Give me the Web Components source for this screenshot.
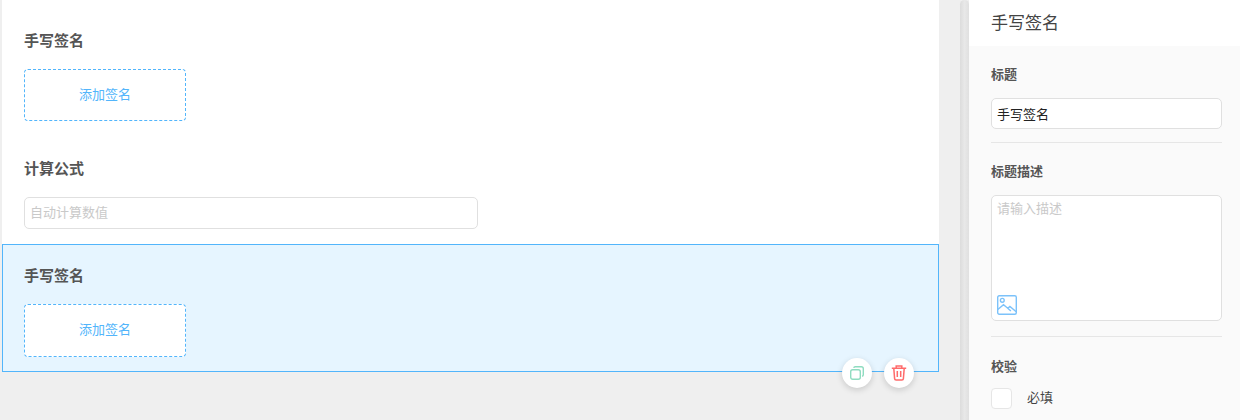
<!DOCTYPE html>
<html lang="zh"><head><meta charset="utf-8">
<style>
html,body{margin:0;padding:0;height:420px;overflow:hidden;background:#efefef;font-family:"Noto Sans CJK SC","Noto Sans",sans-serif}
</style></head><body>
<form-designer>
  <form-canvas slot="canvas">
    <form-item label="手写签名" style="--top:31px;--h:137px"><sign-box></sign-box></form-item>
    <form-item label="计算公式" style="--top:22px;--h:107px"><calc-input>自动计算数值</calc-input></form-item>
    <form-item label="手写签名" selected style="--top:22px;--h:128px"><sign-box style="height:53px"></sign-box>
      <item-actions slot="actions"></item-actions>
    </form-item>
  </form-canvas>
  <side-panel slot="panel" heading="手写签名"></side-panel>
</form-designer>
<script>
function def(name, html){
  customElements.define(name, class extends HTMLElement{
    constructor(){super();this.attachShadow({mode:'open'}).innerHTML=html;}
    connectedCallback(){
      const h=this.shadowRoot.querySelector('[data-label]');
      if(h)h.textContent=this.getAttribute('label')||this.getAttribute('heading')||'';
    }
  });
}
def('form-designer',`<style>
:host{display:flex;width:1240px;height:420px;overflow:hidden;background:#efefef}
.left{width:960px;flex:none;display:flex}
.bar{width:9px;flex:none;height:420px;background:linear-gradient(90deg,#dcdcdc,#e8e8e8 50%,#e0e0e0);border-radius:5px 5px 0 0}
.right{flex:1;min-width:0}
</style><div class="left"><slot name="canvas"></slot></div><div class="bar"></div><div class="right"><slot name="panel"></slot></div>`);
def('form-canvas',`<style>
:host{display:block;width:937px;margin-left:2px;height:372px;background:#fff}
</style><slot></slot>`);
def('form-item',`<style>
:host{display:block;position:relative;box-sizing:border-box;height:var(--h);padding:var(--top) 0 0 22px}
:host([selected]){background:#e6f5ff;outline:1px solid #52b5fb;outline-offset:-1px}
.t{font-size:15px;font-weight:700;line-height:18px;height:20px;margin-bottom:18px;color:#555}
</style><div class="t" data-label></div><slot></slot><slot name="actions"></slot>`);
def('sign-box',`<style>
:host{display:flex;align-items:center;justify-content:center;box-sizing:border-box;width:162px;height:52px;padding-bottom:4px;border:1px dashed #52b5fb;border-radius:4px;background:#fff;color:#52b5fb;font-size:13px}
</style>添加签名`);
def('calc-input',`<style>
:host{display:flex;align-items:center;box-sizing:border-box;width:454px;height:32px;border:1px solid #e0e0e0;border-radius:5px;padding:0 0 4px 5px;background:#fff;color:#c9c9c9;font-size:13px}
</style><slot></slot>`);
def('item-actions',`<style>
:host{position:absolute;right:25px;top:114px;display:flex;gap:12px}
.b{width:30px;height:30px;border-radius:50%;background:#fff;box-shadow:0 2px 6px rgba(0,0,0,.16);display:flex;align-items:center;justify-content:center}
svg{display:block}
</style><div class="b"><svg width="14" height="14" viewBox="0 0 14 14" fill="none" stroke="#8fdcc0" stroke-width="1.4"><rect x=".7" y="3.7" width="9.6" height="9.6" rx="2"/><path d="M3.7 1.9A1.6 1.6 0 0 1 5.3.7h6c1.1 0 2 .9 2 2v6a1.6 1.6 0 0 1-1.2 1.5"/></svg></div>
<div class="b"><svg width="16" height="16" viewBox="0 0 16 16" fill="none" stroke="#ff6b6b" stroke-width="1.5"><path d="M.8 3.2h14.4M5.2 3V1h5.6v2M2.8 3.4l.8 10.2a1.5 1.5 0 0 0 1.5 1.4h5.8a1.5 1.5 0 0 0 1.5-1.4l.8-10.2M6.3 6v6M9.7 6v6"/></svg></div>`);
def('side-panel',`<style>
:host{display:block;height:420px;background:#fafafa;color:#555}
.h{height:46px;background:#fff;padding-left:22px;font-size:17px;line-height:44px;color:#444;box-sizing:border-box}
.body{padding:0 18px 0 22px}
.lab{font-size:13px;font-weight:700;line-height:16px;color:#555;height:18px}
.inp{box-sizing:border-box;height:31px;border:1px solid #e0e0e0;border-radius:5px;background:#fff;padding-left:5px;font-size:13px;line-height:30px;color:#222;margin-top:14px}
.hr{height:1px;background:#e6e6e6}
.ta{box-sizing:border-box;height:126px;border:1px solid #e0e0e0;border-radius:5px;background:#fff;padding:2px 5px 3px;font-size:13px;line-height:20px;color:#c9c9c9;margin-top:14px;display:flex;flex-direction:column;justify-content:space-between}
.ta svg{display:block;margin-bottom:2px}
.chk{display:flex;align-items:center;margin-top:12px;font-size:13px;line-height:18px;color:#444}
.box{box-sizing:border-box;width:21px;height:21px;border:1px solid #e6e6e6;border-radius:4px;background:#fff;margin-right:15px}
</style>
<div class="h" data-label></div>
<div class="body">
<div class="lab" style="margin-top:20px">标题</div>
<div class="inp">手写签名</div>
<div class="hr" style="margin-top:13px"></div>
<div class="lab" style="margin-top:20px">标题描述</div>
<div class="ta"><span>请输入描述</span><svg width="20" height="20" viewBox="0 0 20 20" fill="none" stroke="#7cc2fa" stroke-width="1.4"><rect x=".7" y=".7" width="18.6" height="18.6" rx="1.5"/><circle cx="5.3" cy="5.3" r="1.9"/><path d="M.8 14.5 6.5 9.6l4.2 3.6 2.2-1.8 6.3 5.4M10.7 13.2l3.2 2.8"/></svg></div>
<div class="hr" style="margin-top:15px"></div>
<div class="lab" style="margin-top:21px">校验</div>
<div class="chk"><div class="box"></div><span style="margin-top:-3px">必填</span></div>
</div>`);
</script>
</body></html>
